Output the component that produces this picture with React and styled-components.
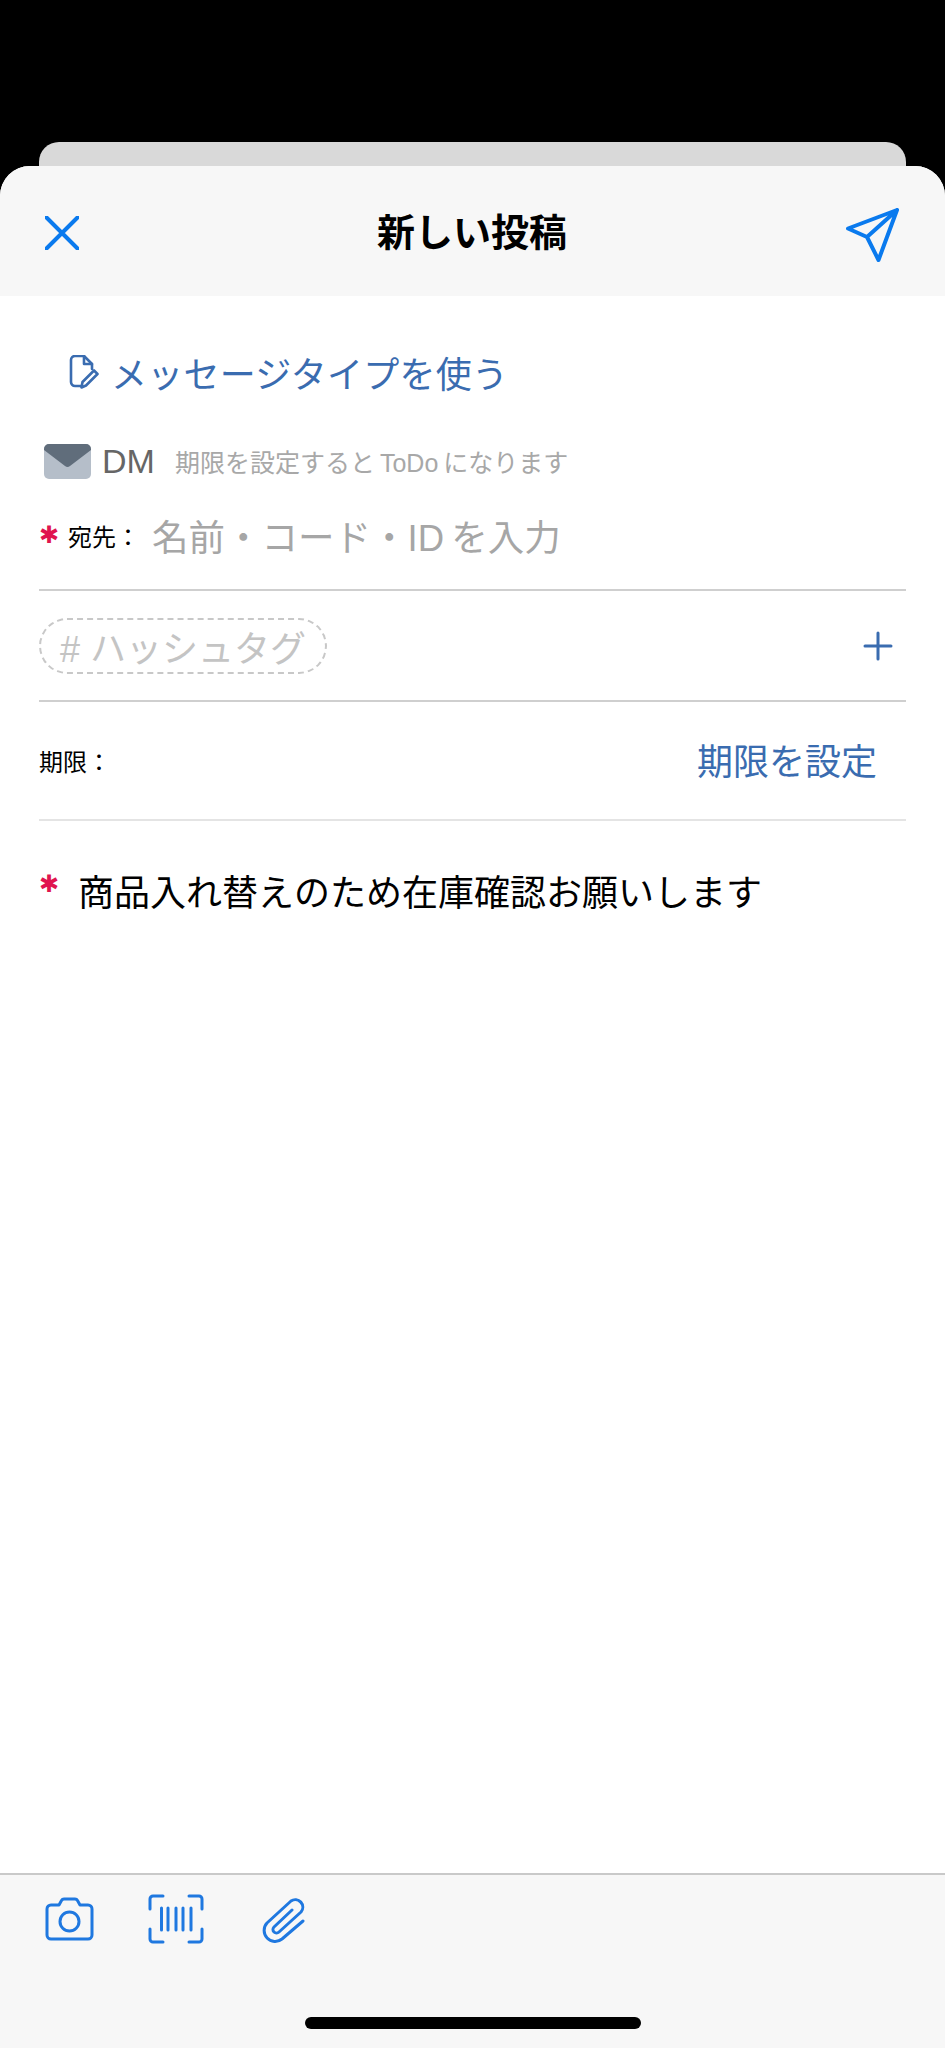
import React from "react";
import styled, { createGlobalStyle } from "styled-components";

const GlobalStyle = createGlobalStyle`
  html, body {
    margin: 0;
    padding: 0;
    background: #000;
  }
  * {
    box-sizing: border-box;
  }
`;

const BLUE = "#0a7aee";
const LINK = "#3a6cb0";

const Page = styled.div`
  width: 945px;
  height: 2048px;
  padding-top: 142px;
  display: flex;
  flex-direction: column;
  background: #000;
  font-family: "Liberation Sans", "Noto Sans CJK JP", sans-serif;
  overflow: hidden;
`;

const BackCard = styled.div`
  flex: none;
  height: 24px;
  margin: 0 39px;
  background: #d9d9d9;
  border-radius: 20px 20px 0 0;
`;

const Sheet = styled.div`
  flex: 1;
  display: flex;
  flex-direction: column;
  background: #fff;
  border-radius: 30px 30px 0 0;
  overflow: hidden;
`;

const Header = styled.header`
  flex: none;
  height: 130px;
  padding: 42px 46px 0 45px;
  display: grid;
  grid-template-columns: 1fr auto 1fr;
  align-items: start;
  background: #f7f7f7;
`;

const Title = styled.h1`
  margin: 1px 0 0;
  font-size: 38px;
  line-height: 48px;
  font-weight: 700;
  color: #000;
`;

const HeaderIcon = styled.svg`
  display: block;
  justify-self: ${(p) => p.$side};
  margin-top: ${(p) => p.$top}px;
  fill: none;
  stroke: ${BLUE};
  stroke-width: 4;
  stroke-linecap: round;
  stroke-linejoin: round;
`;

const Content = styled.main`
  flex: 1;
  padding: 0 39px;
`;

const TemplateLink = styled.div`
  height: 48px;
  margin-top: 52px;
  padding-left: 30px;
  display: flex;
  align-items: center;
  gap: 12px;
  font-size: 36px;
  letter-spacing: 0.25px;
  color: ${LINK};
`;

const TypeRow = styled.div`
  height: 40px;
  margin-top: 45px;
  padding-left: 5px;
  display: flex;
  align-items: center;
`;

const TypeName = styled.span`
  margin-left: 11px;
  font-size: 34px;
  color: #666;
`;

const TypeHint = styled.span`
  margin-left: 20px;
  font-size: 25px;
  color: #a8a8a8;
`;

const Row = styled.div`
  display: flex;
  align-items: center;
  justify-content: space-between;
  height: ${(p) => p.$height}px;
  border-bottom: ${(p) => (p.$light ? "2px solid #e4e4e4" : "2px solid #cfcfcf")};
`;

const Recipient = styled.div`
  display: flex;
  align-items: center;
`;

const Required = styled.span`
  flex: none;
  width: ${(p) => p.$width}px;
  font-family: "DejaVu Sans", sans-serif;
  font-size: 24px;
  line-height: 1;
  color: #e0144f;
`;

const FieldLabel = styled.span`
  font-size: 24px;
  color: #000;
`;

const Placeholder = styled.span`
  margin-left: 12px;
  font-size: 36.5px;
  color: #a6a6a6;
`;

const HashtagPill = styled.div`
  height: 56px;
  padding: 0 19px;
  display: flex;
  align-items: center;
  border: 2px dashed #c8c8c8;
  border-radius: 28px;
  font-size: 36px;
  color: #c4c4c4;
`;

const PlusIcon = styled.svg`
  display: block;
  margin-right: 13px;
  stroke: ${LINK};
  stroke-width: 3;
  stroke-linecap: round;
`;

const DueLink = styled.span`
  margin-right: 29px;
  margin-bottom: 3px;
  font-size: 36px;
  color: ${LINK};
`;

const BodyRow = styled.div`
  margin-top: 49px;
  display: flex;
  align-items: flex-start;
  font-size: 36px;
  line-height: 48px;
  color: #000;
`;

const BodyMark = styled(Required)`
  margin-top: 2px;
`;

const BodyText = styled.p`
  margin: 0;
`;

const Toolbar = styled.footer`
  flex: none;
  height: 175px;
  padding: 22px 0 0 45px;
  display: flex;
  align-items: flex-start;
  background: #f7f7f7;
  border-top: 2px solid #c9c9c9;
  position: relative;
`;

const ToolIcon = styled.svg`
  display: block;
  flex: none;
  margin-right: ${(p) => p.$gap}px;
  margin-top: ${(p) => p.$top}px;
  fill: none;
  stroke: #1f78e0;
  stroke-width: 3;
  stroke-linecap: round;
  stroke-linejoin: round;
`;

const HomeIndicator = styled.div`
  position: absolute;
  left: 305px;
  top: 142px;
  width: 336px;
  height: 12px;
  border-radius: 6px;
  background: #000;
`;

export default function App() {
  return (
    <Page>
      <GlobalStyle />
      <BackCard />
      <Sheet>
        <Header>
          <HeaderIcon $side="start" $top={8} width="34" height="34" viewBox="0 0 34 34">
            <path d="M1.500 1.500 32.500 32.500M32.500 1.500 1.500 32.500" />
          </HeaderIcon>
          <Title>新しい投稿</Title>
          <HeaderIcon $side="end" $top={0} width="54" height="54" viewBox="0 0 54 54">
            <path d="M52 2 3 20.500 22 29 33.500 52ZM52 2 22 29" />
          </HeaderIcon>
        </Header>
        <Content>
          <TemplateLink>
            <svg width="30" height="34" viewBox="0 0 30 34" fill="none" stroke={LINK} strokeWidth="2.6" strokeLinecap="round" strokeLinejoin="round">
              <path d="M12 31H6a4 4 0 0 1-4-4V5a4 4 0 0 1 4-4h9l8 8v5" />
              <path d="M15 1v8h8" />
              <path d="M25 15.500 28.500 19 17 30.500 12.500 32.500 13.500 27Z" />
            </svg>
            メッセージタイプを使う
          </TemplateLink>
          <TypeRow>
            <svg width="47" height="35" viewBox="0 0 47 35">
              <rect width="47" height="35" rx="5" fill="#b5bec9" />
              <path d="M0 5a5 5 0 0 1 5-5h37a5 5 0 0 1 5 5v1L26 22a4 4 0 0 1-5 0L0 6Z" fill="#606d7b" />
            </svg>
            <TypeName>DM</TypeName>
            <TypeHint>期限を設定すると{"\u2009"}ToDo{"\u2009"}になります</TypeHint>
          </TypeRow>
          <Row $height={110}>
            <Recipient>
              <Required $width={29}>✱</Required>
              <FieldLabel>宛先：</FieldLabel>
              <Placeholder>名前・コード・ID{"\u2009"}を入力</Placeholder>
            </Recipient>
          </Row>
          <Row $height={111}>
            <HashtagPill># ハッシュタグ</HashtagPill>
            <PlusIcon width="30" height="30" viewBox="0 0 30 30">
              <path d="M15 2V28M2 15H28" />
            </PlusIcon>
          </Row>
          <Row $height={119} $light>
            <FieldLabel>期限：</FieldLabel>
            <DueLink>期限を設定</DueLink>
          </Row>
          <BodyRow>
            <BodyMark $width={39}>✱</BodyMark>
            <BodyText>商品入れ替えのため在庫確認お願いします</BodyText>
          </BodyRow>
        </Content>
        <Toolbar>
          <ToolIcon $gap={54} $top={0} width="49" height="44" viewBox="0 0 49 44">
            <path d="M6 8h8l2.500-4.500a3 3 0 0 1 2.500-1.500h11a3 3 0 0 1 2.500 1.500L35 8h8a4 4 0 0 1 4 4v26a4 4 0 0 1-4 4H6a4 4 0 0 1-4-4V12a4 4 0 0 1 4-4Z" />
            <circle cx="24.500" cy="24.500" r="9.500" />
          </ToolIcon>
          <ToolIcon $gap={58} $top={-3} width="56" height="50" viewBox="0 0 56 50">
            <path d="M15 2H5a3 3 0 0 0-3 3v10M41 2h10a3 3 0 0 1 3 3v10M15 48H5a3 3 0 0 1-3-3V35M41 48h10a3 3 0 0 0 3-3V35" />
            <path d="M13.500 14V36M20 14V36M28 14V36M35 14V36M43 14V36" />
          </ToolIcon>
          <ToolIcon $gap={0} $top={-2} width="44" height="48" viewBox="0 0 44 48">
            <path d="M41 26 20 44a11 11 0 0 1-15-16L29 6a7.500 7.500 0 0 1 10 11L17 37a3.500 3.500 0 0 1-5-5L30 15" />
          </ToolIcon>
          <HomeIndicator />
        </Toolbar>
      </Sheet>
    </Page>
  );
}
